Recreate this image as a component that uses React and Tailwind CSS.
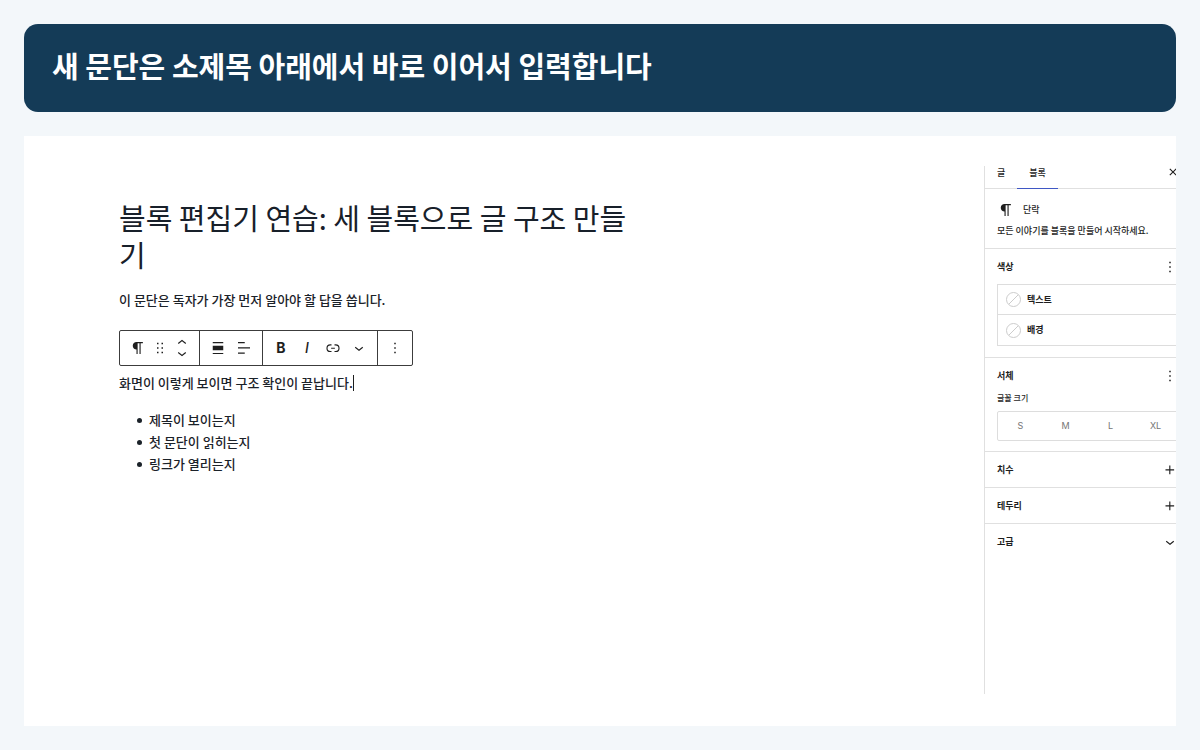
import clsx from 'clsx';

const ICONS = {
  paragraph:
    'm9.99609 14v-.2251l.00391.0001v6.225h1.5v-14.5h2.5v14.5h1.5v-14.5h3v-1.5h-8.50391c-2.76142 0-5 2.23858-5 5 0 2.7614 2.23858 5 5 5z',
  drag: 'M8 7h2V5H8v2zm0 6h2v-2H8v2zm0 6h2v-2H8v2zm6-14v2h2V5h-2zm0 8h2v-2h-2v2zm0 6h2v-2h-2v2z',
  movers:
    'M6.5 5.4L12 1l5.5 4.4-.9 1.2L12 3 7.5 6.6l-1-1.2zM17.5 18.6L12 23l-5.5-4.4.9-1.2L12 21l4.5-3.6 1 1.2z',
  alignNone: 'M19 5.5H5V4h14v1.5ZM19 20H5v-1.5h14V20ZM5 9h14v6H5V9Z',
  textLeft: 'M13 5.5H4V4h9v1.5Zm7 7H4V11h16v1.5Zm-7 7H4V18h9v1.5Z',
  link: 'M10 17.389H8.444A5.194 5.194 0 1 1 8.444 7H10v1.5H8.444a3.694 3.694 0 0 0 0 7.389H10v1.5ZM14 7h1.556a5.194 5.194 0 0 1 0 10.39H14v-1.5h1.556a3.694 3.694 0 0 0 0-7.39H14V7Zm-4.5 6h5v-1.5h-5V13Z',
  chevron: 'M17.5 11.6L12 16l-5.5-4.4.9-1.2L12 14l4.5-3.6 1 1.2z',
  more: 'M13 19h-2v-2h2v2zm0-6h-2v-2h2v2zm0-6h-2V5h2v2z',
  plus: 'M11 12.5V17.5H12.5V12.5H17.5V11H12.5V6H11V11H6V12.5H11Z',
  close:
    'M12 13.06l3.712 3.713 1.061-1.06L13.061 12l3.712-3.712-1.06-1.06L12 10.938 8.288 7.227l-1.061 1.06L10.939 12l-3.712 3.712 1.06 1.061L12 13.061z',
};

const Icon = ({ name }) => (
  <svg viewBox="0 0 24 24" className="size-[18px] shrink-0 overflow-visible" fill="currentColor" aria-hidden="true">
    <path d={ICONS[name]} />
  </svg>
);

const ToolButton = ({ label, narrow, children }) => (
  <button
    type="button"
    aria-label={label}
    className={clsx('flex h-full items-center justify-center', narrow ? 'w-[18px]' : 'w-[26px]')}
  >
    {children}
  </button>
);

function BlockToolbar() {
  return (
    <div
      role="toolbar"
      aria-label="블록 도구"
      className="mt-[19px] flex h-9 w-fit divide-x divide-[#3c3c3c] rounded-[2px] border border-[#3c3c3c] text-[#1e1e1e]"
    >
      <div className="flex pr-1 pl-[5px]">
        <ToolButton label="단락"><Icon name="paragraph" /></ToolButton>
        <ToolButton label="드래그" narrow><Icon name="drag" /></ToolButton>
        <ToolButton label="이동"><Icon name="movers" /></ToolButton>
      </div>
      <div className="flex px-[5px]">
        <ToolButton label="정렬"><Icon name="alignNone" /></ToolButton>
        <ToolButton label="텍스트 정렬"><Icon name="textLeft" /></ToolButton>
      </div>
      <div className="flex px-[5px] font-['Inter',sans-serif] text-[14px]">
        <ToolButton label="굵게"><b>B</b></ToolButton>
        <ToolButton label="기울임꼴"><i className="font-medium">I</i></ToolButton>
        <ToolButton label="링크"><Icon name="link" /></ToolButton>
        <ToolButton label="더 보기"><Icon name="chevron" /></ToolButton>
      </div>
      <div className="flex px-1">
        <ToolButton label="옵션"><Icon name="more" /></ToolButton>
      </div>
    </div>
  );
}

function Editor() {
  return (
    <article className="min-w-0 flex-1 pt-[63px] pl-[95px] text-[13px] leading-[22px] font-medium text-[#1b2229]">
      <h2 className="max-w-[520px] text-[29px] leading-[37px] font-normal text-[#18202a]">
        블록 편집기 연습: 세 블록으로 글 구조 만들기
      </h2>
      <p className="mt-4">이 문단은 독자가 가장 먼저 알아야 할 답을 씁니다.</p>
      <BlockToolbar />
      <p className="mt-1.5 flex items-center">
        화면이 이렇게 보이면 구조 확인이 끝납니다.
        <span className="h-4 w-px bg-[#1e1e1e]" />
      </p>
      <ul className="mt-[15px] pl-[18px]">
        {['제목이 보이는지', '첫 문단이 읽히는지', '링크가 열리는지'].map((item) => (
          <li key={item} className="flex items-center gap-[7px] before:size-[5px] before:rounded-full before:bg-current">
            {item}
          </li>
        ))}
      </ul>
    </article>
  );
}

const PanelHeader = ({ title, icon }) => (
  <div className="flex h-[35px] items-center justify-between">
    <h3 className="font-semibold">{title}</h3>
    <button type="button" aria-label={`${title} 옵션`}>
      <Icon name={icon} />
    </button>
  </div>
);

function Sidebar() {
  return (
    <aside className="mt-[30px] mb-8 w-48 shrink-0 overflow-hidden border-l border-[#e0e0e0] text-[9px] font-medium text-[#1e1e1e]">
      {/* Panel is wider than its column and gets clipped on the right */}
      <div className="w-[206px] divide-y divide-[#e0e0e0]">
        <div className="flex h-[23px] items-start pr-[9px] leading-[13px]">
          <button type="button" className="px-3 pb-[9px]">글</button>
          <button type="button" className="border-b border-[#3f57c4] px-3 pb-[9px]">블록</button>
          <button type="button" aria-label="닫기" className="ml-auto flex h-[11px] items-center">
            <Icon name="close" />
          </button>
        </div>

        <div className="px-3 pt-3 pb-[9px]">
          <div className="flex items-center gap-2">
            <Icon name="paragraph" />
            <h3>단락</h3>
          </div>
          <p className="mt-1 leading-4">모든 이야기를 블록을 만들어 시작하세요.</p>
        </div>

        <section className="px-3 pb-[11px]">
          <PanelHeader title="색상" icon="more" />
          <div className="divide-y divide-[#dddddd] border border-[#dddddd]">
            {['텍스트', '배경'].map((label) => (
              <button key={label} type="button" className="flex h-[30px] w-full items-center gap-1.5 pl-2 font-semibold">
                <svg viewBox="0 0 15 15" className="size-[15px]" fill="none" stroke="#cccccc" aria-hidden="true">
                  <circle cx="7.5" cy="7.5" r="7" />
                  <path d="M2.8 12.2 12.2 2.8" />
                </svg>
                {label}
              </button>
            ))}
          </div>
        </section>

        <section className="px-3 pb-2.5">
          <PanelHeader title="서체" icon="more" />
          <p className="mb-2 text-[8px] leading-[10px]">글꼴 크기</p>
          <div className="flex h-[30px] rounded-[2px] border border-[#dddddd] font-['Inter',sans-serif] font-normal text-[#757575]">
            {['S', 'M', 'L', 'XL'].map((size) => (
              <button key={size} type="button" className="flex-1">{size}</button>
            ))}
          </div>
        </section>

        <section className="px-3"><PanelHeader title="치수" icon="plus" /></section>
        <section className="px-3"><PanelHeader title="테두리" icon="plus" /></section>
        <section className="px-3"><PanelHeader title="고급" icon="chevron" /></section>
      </div>
    </aside>
  );
}

export default function App() {
  return (
    <div className="flex min-h-screen flex-col gap-6 bg-[#f3f7fa] p-6 font-['Noto_Sans_CJK_KR',sans-serif]">
      <header className="flex h-[88px] items-center rounded-[14px] bg-[#143b57] px-7 pb-1">
        <h1 className="text-[29px] font-bold text-white">새 문단은 소제목 아래에서 바로 이어서 입력합니다</h1>
      </header>
      <main className="flex flex-1 bg-white">
        <Editor />
        <Sidebar />
      </main>
    </div>
  );
}
